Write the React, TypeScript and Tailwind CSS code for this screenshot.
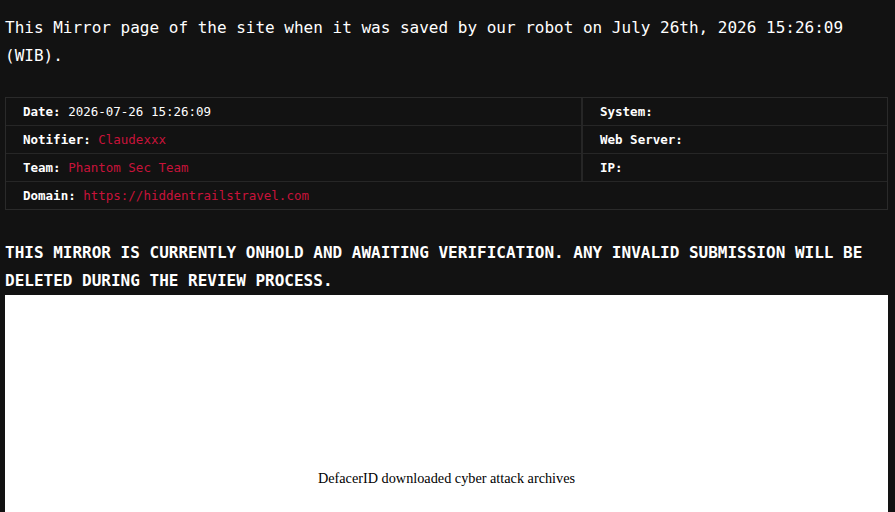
const MONO = "font-['DejaVu_Sans_Mono','Liberation_Mono',monospace]";

type Row = { label: string; value?: string; accent?: boolean; side?: string };

const ROWS: Row[] = [
  { label: "Date:", value: "2026-07-26 15:26:09", side: "System:" },
  { label: "Notifier:", value: "Claudexxx", accent: true, side: "Web Server:" },
  { label: "Team:", value: "Phantom Sec Team", accent: true, side: "IP:" },
  { label: "Domain:", value: "https://hiddentrailstravel.com", accent: true },
];

function Cell({ label, value, accent }: { label: string; value?: string; accent?: boolean }) {
  return (
    <div className="flex h-[27px] items-center pl-[17px] pt-[2px] text-[12.5px] leading-none">
      <span className="font-bold text-white">{label}</span>
      {value && (
        <span className={"ml-[7.5px] " + (accent ? "text-[#c8123a]" : "text-white")}>{value}</span>
      )}
    </div>
  );
}

export default function App() {
  return (
    <div className={`h-[512px] w-[895px] overflow-hidden bg-[#121212] pl-[5px] pr-[7px] ${MONO}`}>
      <p className="pt-[14px] text-[16px] leading-[28px] text-white">
        This Mirror page of the site when it was saved by our robot on July 26th, 2026 15:26:09 (WIB).
      </p>

      {/* info table */}
      <div className="mt-[27px] border border-[#2a2a2a]">
        {ROWS.map((r) =>
          r.side !== undefined ? (
            <div key={r.label} className="grid grid-cols-[577px_1fr] border-b border-[#262626]">
              <div className="border-r-2 border-[#262626]">
                <Cell label={r.label} value={r.value} accent={r.accent} />
              </div>
              <Cell label={r.side} />
            </div>
          ) : (
            <div key={r.label}>
              <Cell label={r.label} value={r.value} accent={r.accent} />
            </div>
          )
        )}
      </div>

      <h2 className="mt-[29px] text-[16px] font-bold leading-[28px] text-white">
        THIS MIRROR IS CURRENTLY ONHOLD AND AWAITING VERIFICATION. ANY INVALID SUBMISSION WILL BE DELETED DURING
        THE REVIEW PROCESS.
      </h2>

      {/* mirrored page frame */}
      <div className="flex h-[240px] items-start justify-center bg-white pt-[174px]">
        <span className="font-['Liberation_Serif',serif] text-[14.25px] leading-[18px] text-black">
          DefacerID downloaded cyber attack archives
        </span>
      </div>
    </div>
  );
}
